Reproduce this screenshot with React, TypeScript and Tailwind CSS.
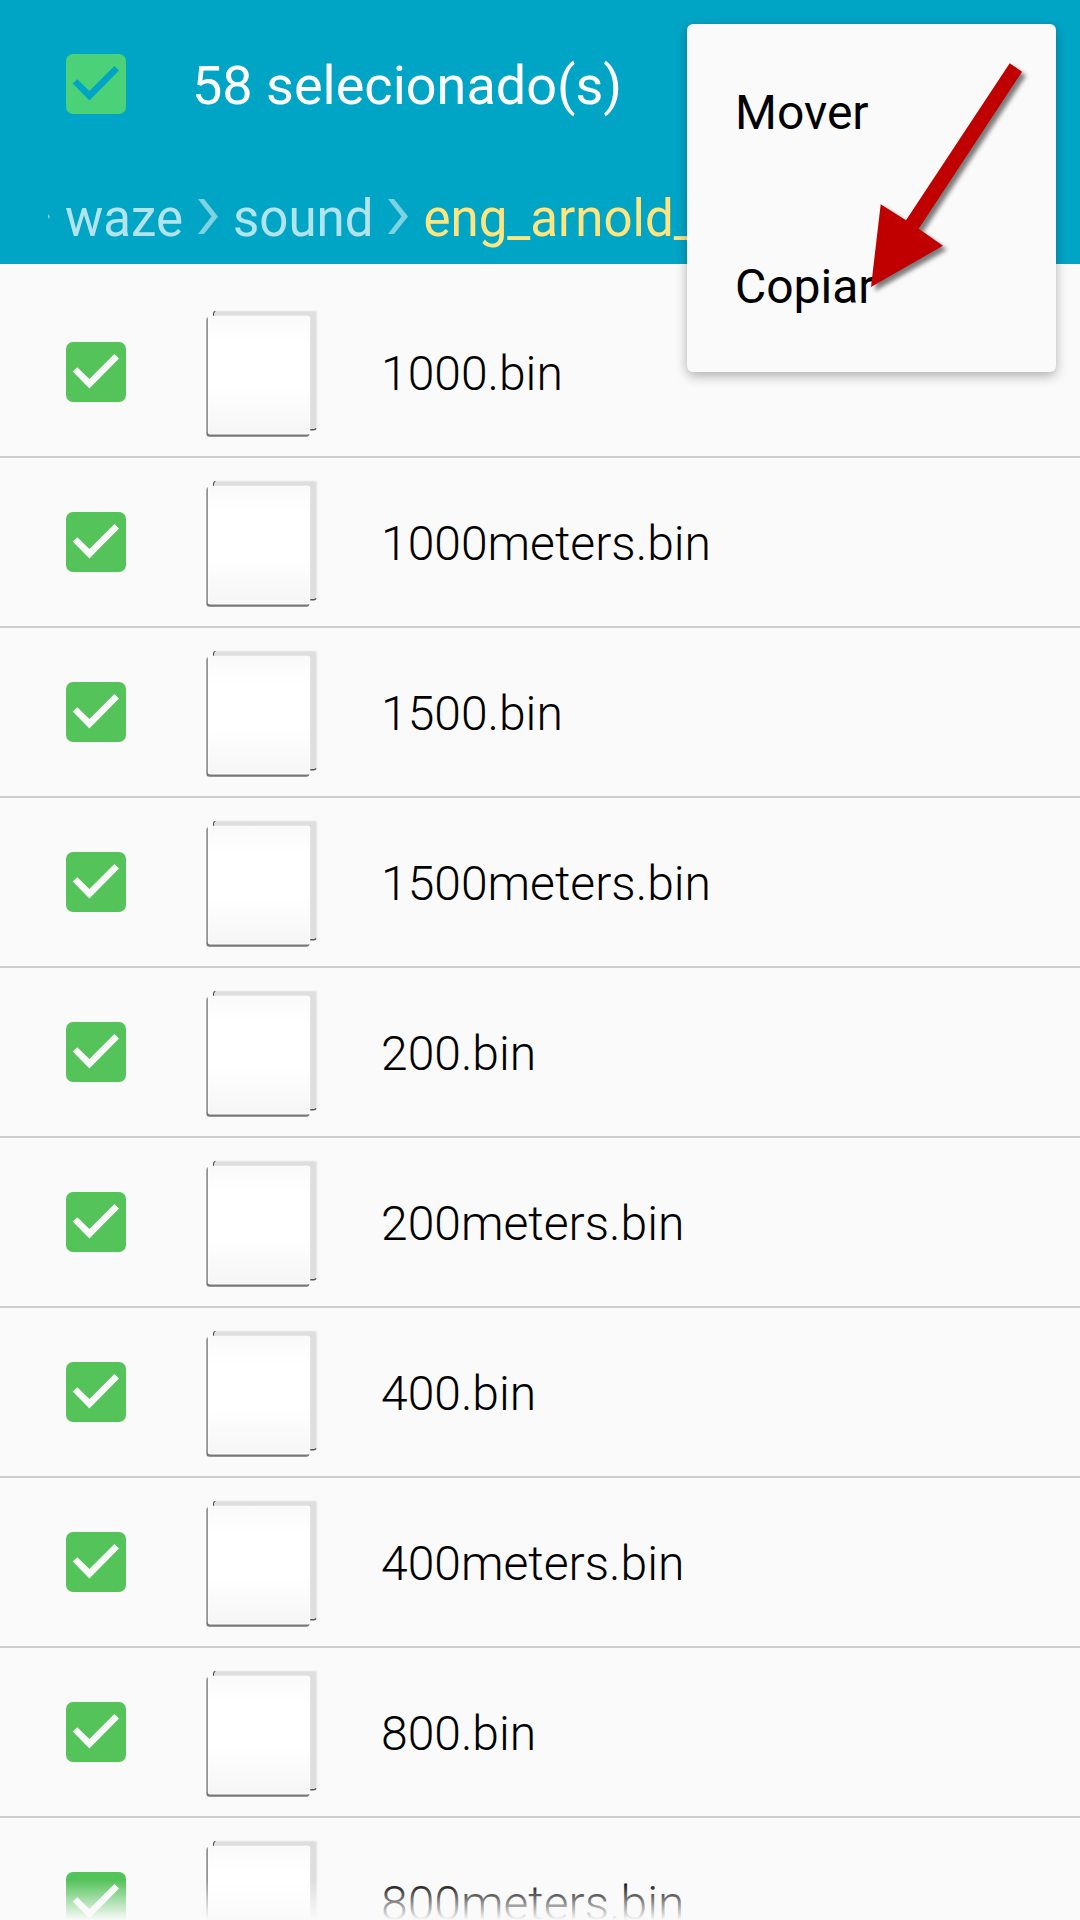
import React, { useState } from "react";
import clsx from "clsx";

const files = [
  "1000.bin",
  "1000meters.bin",
  "1500.bin",
  "1500meters.bin",
  "200.bin",
  "200meters.bin",
  "400.bin",
  "400meters.bin",
  "800.bin",
  "800meters.bin",
];

type CheckProps = {
  id: string;
  checked: boolean;
  onChange: () => void;
  header?: boolean;
};

const Check = ({ id, checked, onChange, header }: CheckProps) => (
  <span className="grid shrink-0">
    <input
      id={id}
      type="checkbox"
      checked={checked}
      onChange={onChange}
      className={clsx(
        "col-start-1 row-start-1 size-[60px] appearance-none rounded-[7px]",
        header ? "bg-[#4bd178]" : "bg-[#54c35a]"
      )}
    />
    {checked && (
      <svg
        viewBox="0 0 60 60"
        className={clsx(
          "pointer-events-none col-start-1 row-start-1 size-[60px]",
          header ? "fill-[#00a5c6]" : "fill-[#fafafa]"
        )}
      >
        <path d="M6.7 29.6 11.3 25.2 23.4 37 48.4 12 53 16.6 23.4 46.6Z" />
      </svg>
    )}
  </span>
);

const PageIcon = () => (
  <svg viewBox="0 0 116 130" className="h-[130px] w-[116px] shrink-0">
    <defs>
      <linearGradient id="sheet" x1="0" y1="0" x2="0" y2="1">
        <stop offset="0" stopColor="#fafafa" />
        <stop offset="0.25" stopColor="#ffffff" />
        <stop offset="0.6" stopColor="#ffffff" />
        <stop offset="1" stopColor="#f6f6f6" />
      </linearGradient>
    </defs>
    <rect x="10" y="3.5" width="104.6" height="119" rx="2" fill="#ececec" />
    <path d="M10.6 9V7Q10.6 4.6 12.6 4.6" fill="none" stroke="#444" strokeWidth="1.2" />
    <rect x="11.2" y="4.6" width="101.8" height="117" rx="2" fill="#dedede" />
    <path d="M106 122.8H110.6Q112.4 122.8 113 121.4" fill="none" stroke="#555" strokeWidth="1.4" />
    <rect x="3.4" y="10" width="103" height="119.8" rx="3" fill="#777" />
    <rect x="4.8" y="8.8" width="102.4" height="118.8" rx="2.5" fill="#fff" />
    <rect x="5.4" y="9" width="101.2" height="117.4" rx="2" fill="url(#sheet)" />
  </svg>
);

const Chevron = () => (
  <svg viewBox="0 0 20 36" className="h-9 w-5 shrink-0 fill-[#7fd2e2]">
    <path d="M0 0H6L20 17.5 6 35H0L13.5 17.5Z" />
  </svg>
);

const Arrow = () => (
  <svg
    viewBox="0 0 164 236"
    className="pointer-events-none absolute top-[34px] left-[180px] h-[236px] w-[164px] drop-shadow-[4px_4px_2px_rgba(0,0,0,0.5)]"
  >
    <path
      d="M142.7 5.3 155 13.7 51.7 170.7 76 187.7 4 229 13.7 146.3 39 162.3Z"
      fill="#c00000"
    />
  </svg>
);

const App = () => {
  const [selected, setSelected] = useState<string[]>(files);
  const allSelected = selected.length === files.length;

  const toggle = (name: string) =>
    setSelected(
      selected.includes(name)
        ? selected.filter((f) => f !== name)
        : [...selected, name]
    );

  return (
    <div className="relative flex h-screen flex-col overflow-hidden bg-[#fafafa] font-[Roboto,sans-serif] text-[48px] leading-[56px] text-black">
      <header className="shrink-0 bg-[#00a5c6]">
        <div className="flex h-[168px] items-center gap-[66px] pl-[66px]">
          <Check
            id="all"
            header
            checked={allSelected}
            onChange={() => setSelected(allSelected ? [] : files)}
          />
          <label htmlFor="all" className="pt-1 text-[54px] leading-[64px] text-white">
            58 selecionado(s)
          </label>
        </div>
        <nav className="ml-12 h-24 overflow-hidden text-[51px] leading-[60px]">
          <div className="-ml-[18px] flex items-center gap-[15px] pt-[17px] text-[#b2e4ee]">
            <Chevron />
            <a href="#waze" className="pt-1">
              waze
            </a>
            <Chevron />
            <a href="#sound" className="pt-1">
              sound
            </a>
            <Chevron />
            <a href="#eng_arnold" className="pt-1 text-[#ffe57f]">
              eng_arnold_
            </a>
          </div>
        </nav>
      </header>

      <ul className="min-h-0 flex-1 overflow-hidden pt-6">
        {files.map((name) => (
          <li
            key={name}
            className="flex h-[170px] items-center border-b-2 border-[#cccccc] pl-[66px]"
          >
            <Check
              id={name}
              checked={selected.includes(name)}
              onChange={() => toggle(name)}
            />
            <label htmlFor={name} className="flex items-center gap-[62px] pl-[77px] font-light">
              <PageIcon />
              <span className="pt-1">{name}</span>
            </label>
          </li>
        ))}
      </ul>
      <div className="pointer-events-none absolute inset-x-0 bottom-0 h-10 bg-linear-to-b from-[#fafafa]/0 to-[#fafafa]" />

      <div className="absolute top-6 right-6 w-[369px] rounded-md bg-[#fafafa] shadow-[0_4px_12px_rgba(0,0,0,0.3)]">
        <button className="block h-[174px] w-full px-12 pt-1 text-left">Mover</button>
        <button className="block h-[174px] w-full px-12 pt-1 text-left">Copiar</button>
        <Arrow />
      </div>
    </div>
  );
};

export default App;
